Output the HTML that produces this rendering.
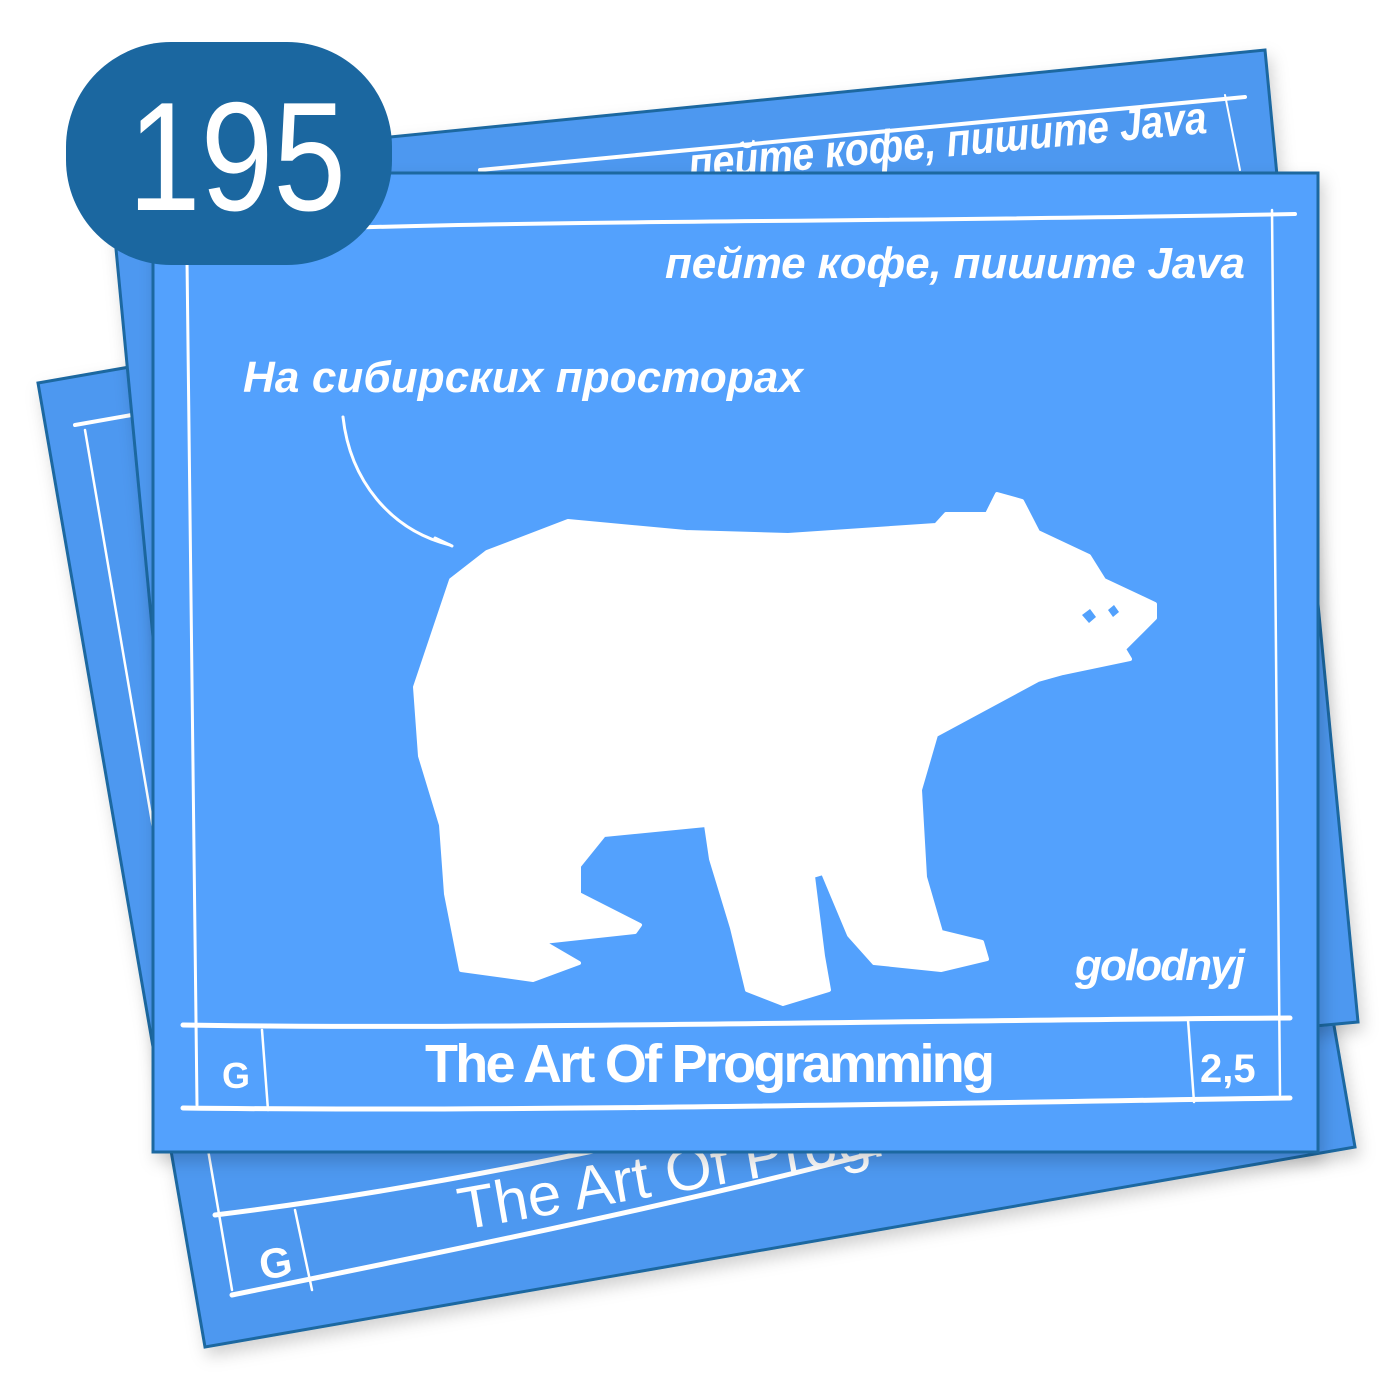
<!DOCTYPE html>
<html><head><meta charset="utf-8">
<style>
html,body{margin:0;padding:0;background:#fff;width:1400px;height:1400px;overflow:hidden}
svg{display:block}
text{font-family:"Liberation Sans","DejaVu Sans",sans-serif;fill:#fff}
</style></head>
<body>
<svg width="1400" height="1400" viewBox="0 0 1400 1400" xmlns="http://www.w3.org/2000/svg">
<defs>
<filter id="sh" x="-10%" y="-10%" width="130%" height="130%">
<feDropShadow dx="4" dy="8" stdDeviation="8" flood-color="#000" flood-opacity="0.18"/>
</filter>
</defs>

<g filter="url(#sh)">
<polygon points="38,383 1188,182 1355,1147 205,1347" fill="#4e98f0" stroke="#1b67a0" stroke-width="3"/>
</g>
<g stroke="#fff" fill="none" stroke-linecap="round">
<path d="M75,425 L160,410" stroke-width="4"/>
<path d="M85,430 L232,1290" stroke-width="2.5"/>
<path d="M215,1215 C500,1180 800,1110 1150,1010" stroke-width="5"/>
<path d="M232,1295 C600,1220 900,1160 1250,1040" stroke-width="5"/>
<path d="M295,1210 L312,1290" stroke-width="2.5"/>
</g>
<text x="0" y="0" font-size="60" transform="translate(462,1230) rotate(-10)">The Art Of Programming</text>
<text x="0" y="0" font-size="42" font-weight="bold" transform="translate(262,1280) rotate(-10)">G</text>

<g filter="url(#sh)">
<polygon points="108,165 1265,50 1358,1022 200,1130" fill="#4e98f0" stroke="#1b67a0" stroke-width="3"/>
</g>
<g stroke="#fff" fill="none" stroke-linecap="round">
<path d="M480,170 C800,140 1000,120 1245,97" stroke-width="4"/>
<path d="M1225,95 L1240,170" stroke-width="2"/>
</g>
<text x="0" y="0" font-size="46" font-weight="bold" font-style="italic" transform="translate(690,180) rotate(-5.2)" textLength="520" lengthAdjust="spacingAndGlyphs">пейте кофе, пишите Java</text>

<g filter="url(#sh)">
<rect x="153" y="173" width="1165" height="979" fill="#52a1fd" stroke="#1b67a0" stroke-width="3"/>
</g>
<g stroke="#fff" fill="none" stroke-linecap="round">
<path d="M340,228 C600,220 900,222 1295,214" stroke-width="4"/>
<path d="M187,260 L197,1105" stroke-width="3"/>
<path d="M1272,210 L1280,1095" stroke-width="2.5"/>
<path d="M183,1025 C500,1030 900,1020 1290,1018" stroke-width="5"/>
<path d="M183,1108 C500,1112 900,1104 1290,1098" stroke-width="5"/>
<path d="M262,1030 L268,1110" stroke-width="2.5"/>
<path d="M1188,1020 L1194,1102" stroke-width="2.5"/>
<path d="M343,417 C350,480 390,530 450,545" stroke-width="3"/>
<path d="M435,538 L452,546" stroke-width="3"/>
</g>
<text x="665" y="278" font-size="44" font-weight="bold" font-style="italic" textLength="580">пейте кофе, пишите Java</text>
<text x="243" y="392" font-size="44" font-weight="bold" font-style="italic" textLength="560">На сибирских просторах</text>
<text x="1075" y="980" font-size="44" font-weight="bold" font-style="italic" textLength="170">golodnyj</text>
<text x="425" y="1082" font-size="54" font-weight="bold" textLength="570">The Art Of Programming</text>
<text x="222" y="1088" font-size="36" font-weight="bold">G</text>
<text x="1200" y="1082" font-size="40" font-weight="bold">2,5</text>

<path fill="#fff" stroke="#fff" stroke-width="4" stroke-linejoin="round" d="M487,552 L451,580 L415,687 L420,756 L441,825 L446,894 L461,970 L533,980 L579,963 L543,942 L635,932 L640,925 L579,894 L579,866 L604,835 L706,825 L711,859 L732,928 L747,990 L783,1004 L829,990 L823,956 L813,876 L823,873 L849,935 L874,963 L941,970 L987,959 L982,942 L941,932 L925,877 L920,790 L936,735 L1038,680 L1063,673 L1130,659 L1124,649 L1155,618 L1155,604 L1104,580 L1089,556 L1038,532 L1022,501 L997,494 L987,514 L946,514 L936,525 L788,535 L686,532 L568,521 Z"/>
<path fill="#52a1fd" d="M1082,615 l8,-6 l6,8 l-7,6 Z M1108,610 l6,-5 l5,7 l-6,5Z"/>

<rect x="66" y="42" width="326" height="223" rx="105" ry="105" fill="#1b67a0"/>
<text x="128" y="210" font-size="155" textLength="218" lengthAdjust="spacingAndGlyphs">195</text>
</svg>
</body></html>
